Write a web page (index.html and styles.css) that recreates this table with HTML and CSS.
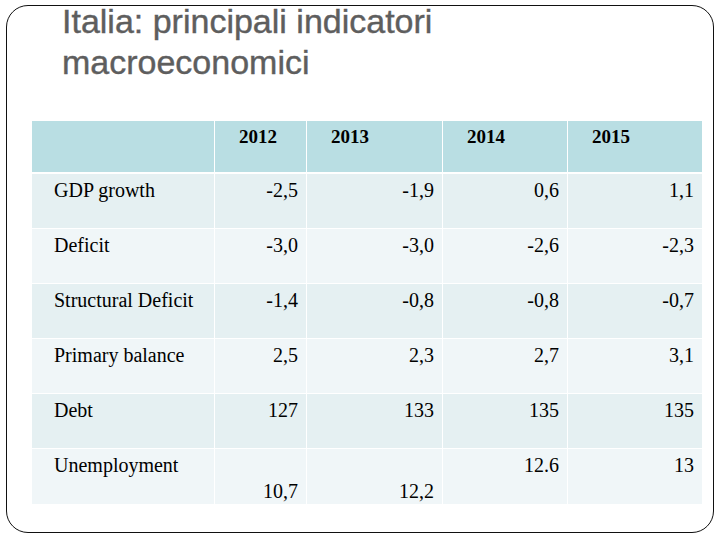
FILE: index.html
```html
<!DOCTYPE html>
<html lang="it">
<head>
<meta charset="utf-8">
<title>Italia: principali indicatori macroeconomici</title>
<link rel="stylesheet" href="styles.css">
</head>
<body>
<div class="slide">
  <h1 class="title">Italia: principali indicatori<br>macroeconomici</h1>
  <table class="data">
    <colgroup>
      <col class="c-label"><col class="c-2012"><col class="c-2013"><col class="c-2014"><col class="c-2015">
    </colgroup>
    <thead>
      <tr>
        <th></th><th>2012</th><th>2013</th><th>2014</th><th>2015</th>
      </tr>
    </thead>
    <tbody>
      <tr class="odd"><td class="label">GDP growth</td><td>-2,5</td><td>-1,9</td><td>0,6</td><td>1,1</td></tr>
      <tr class="even"><td class="label">Deficit</td><td>-3,0</td><td>-3,0</td><td>-2,6</td><td>-2,3</td></tr>
      <tr class="odd"><td class="label">Structural Deficit</td><td>-1,4</td><td>-0,8</td><td>-0,8</td><td>-0,7</td></tr>
      <tr class="even"><td class="label">Primary balance</td><td>2,5</td><td>2,3</td><td>2,7</td><td>3,1</td></tr>
      <tr class="odd"><td class="label">Debt</td><td>127</td><td>133</td><td>135</td><td>135</td></tr>
      <tr class="even"><td class="label">Unemployment</td><td class="bottom">10,7</td><td class="bottom">12,2</td><td>12.6</td><td>13</td></tr>
    </tbody>
  </table>
</div>
</body>
</html>
```
FILE: styles.css
```css
html, body {
  margin: 0;
  padding: 0;
  background: #ffffff;
}

.slide {
  box-sizing: border-box;
  width: 708px;
  height: 528px;
  margin: 5px 0 0 6px;
  border: 1px solid #111111;
  border-radius: 22px;
  display: flex;
  flex-direction: column;
}

.title {
  margin: -5px 0 0 55px;
  font-family: "Liberation Sans", Arial, sans-serif;
  font-weight: normal;
  font-size: 34px;
  line-height: 41px;
  color: #5e5e5e;
  -webkit-text-stroke: 0.4px #5e5e5e;
}

.data {
  margin: 37px 0 0 24px;
  width: 671px;
  border-collapse: collapse;
  table-layout: fixed;
  font-family: "Liberation Serif", "Times New Roman", serif;
  color: #000000;
}

.c-label { width: 183px; }
.c-2012 { width: 92px; }
.c-2013 { width: 136px; }
.c-2014 { width: 125px; }
.c-2015 { width: 135px; }

.data th,
.data td {
  border: 1px solid #ffffff;
  padding: 5px 8px 0 8px;
  vertical-align: top;
}

.data th {
  height: 46px;
  background: #b9dee3;
  font-size: 19px;
  line-height: 1.15;
  font-weight: bold;
  text-align: left;
  padding-left: 24px;
  border-bottom: 2px solid #ffffff;
}

.data td {
  height: 49px;
  font-size: 20px;
  line-height: 1.15;
  text-align: right;
}

.data td.label {
  text-align: left;
  padding-left: 22px;
}

.data td.bottom {
  vertical-align: bottom;
  padding-bottom: 1px;
}

.odd td { background: #e5f0f2; }
.even td { background: #f0f6f8; }
```
